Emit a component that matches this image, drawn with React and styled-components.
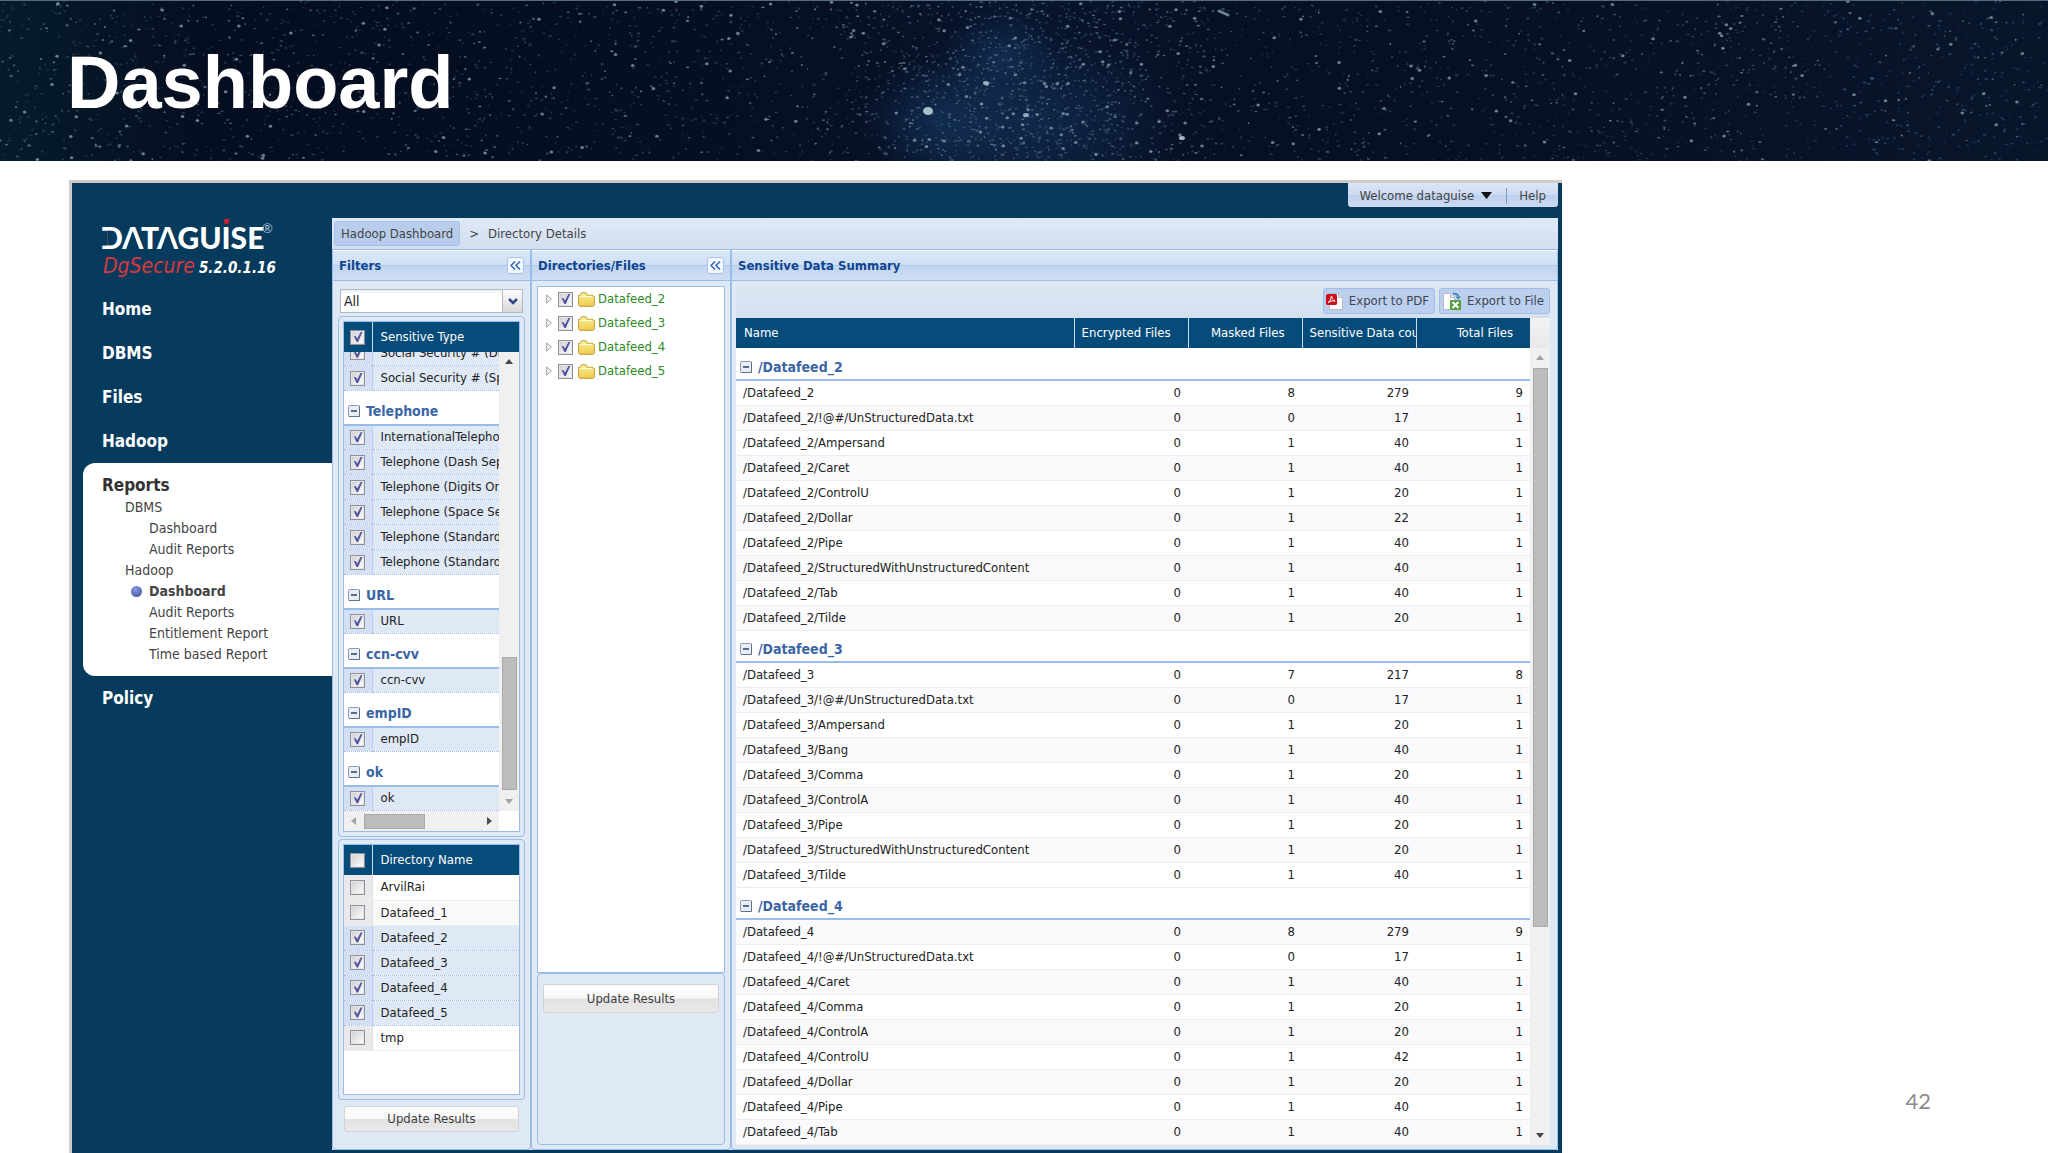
import React, { useState } from "react";
import styled, { createGlobalStyle, css } from "styled-components";

const GlobalStyle = createGlobalStyle`
  * { box-sizing: border-box; }

  body {
    margin: 0;
    background: #fff;
    color: #222;
    font: 13px/16px "DejaVu Sans Condensed", "DejaVu Sans", sans-serif;
  }

  button, select, input { font: inherit; color: inherit; margin: 0; }
  table { border-collapse: collapse; border-spacing: 0; table-layout: fixed; width: 100%; }
  a { color: inherit; text-decoration: none; }
  ul { list-style: none; margin: 0; padding: 0; }
`;

const navy = "#063b5d";
const headBlue = "#064c7b";
const line = "#99bce8";
const panelBg = "#dfe8f5";

/* ---------- data ---------- */

const sensitiveGroups = [
  { title: "", items: ["Social Security # (Digits)", "Social Security # (Space)"] },
  {
    title: "Telephone",
    items: [
      "InternationalTelephone",
      "Telephone (Dash Separated)",
      "Telephone (Digits Only)",
      "Telephone (Space Separated)",
      "Telephone (Standard)",
      "Telephone (Standard US)",
    ],
  },
  { title: "URL", items: ["URL"] },
  { title: "ccn-cvv", items: ["ccn-cvv"] },
  { title: "empID", items: ["empID"] },
  { title: "ok", items: ["ok"] },
];

const directories = [
  ["ArvilRai", false],
  ["Datafeed_1", false],
  ["Datafeed_2", true],
  ["Datafeed_3", true],
  ["Datafeed_4", true],
  ["Datafeed_5", true],
  ["tmp", false],
];

const tree = ["Datafeed_2", "Datafeed_3", "Datafeed_4", "Datafeed_5"];

const summary = [
  {
    name: "/Datafeed_2",
    rows: [
      ["", 0, 8, 279, 9],
      ["/!@#/UnStructuredData.txt", 0, 0, 17, 1],
      ["/Ampersand", 0, 1, 40, 1],
      ["/Caret", 0, 1, 40, 1],
      ["/ControlU", 0, 1, 20, 1],
      ["/Dollar", 0, 1, 22, 1],
      ["/Pipe", 0, 1, 40, 1],
      ["/StructuredWithUnstructuredContent", 0, 1, 40, 1],
      ["/Tab", 0, 1, 40, 1],
      ["/Tilde", 0, 1, 20, 1],
    ],
  },
  {
    name: "/Datafeed_3",
    rows: [
      ["", 0, 7, 217, 8],
      ["/!@#/UnStructuredData.txt", 0, 0, 17, 1],
      ["/Ampersand", 0, 1, 20, 1],
      ["/Bang", 0, 1, 40, 1],
      ["/Comma", 0, 1, 20, 1],
      ["/ControlA", 0, 1, 40, 1],
      ["/Pipe", 0, 1, 20, 1],
      ["/StructuredWithUnstructuredContent", 0, 1, 20, 1],
      ["/Tilde", 0, 1, 40, 1],
    ],
  },
  {
    name: "/Datafeed_4",
    rows: [
      ["", 0, 8, 279, 9],
      ["/!@#/UnStructuredData.txt", 0, 0, 17, 1],
      ["/Caret", 0, 1, 40, 1],
      ["/Comma", 0, 1, 20, 1],
      ["/ControlA", 0, 1, 20, 1],
      ["/ControlU", 0, 1, 42, 1],
      ["/Dollar", 0, 1, 20, 1],
      ["/Pipe", 0, 1, 40, 1],
      ["/Tab", 0, 1, 40, 1],
    ],
  },
];

/* ---------- banner ---------- */

const Page = styled.div`
  display: flex;
  flex-direction: column;
  min-height: 100vh;
`;

const Banner = styled.header`
  display: grid;
  height: 161px;
  overflow: hidden;
  border-top: 1px solid #566b7d;
  background: linear-gradient(90deg, #051c2c 0, #050e20 10%, #060f23 40%, #08152d 50%, #060f23 62%, #071227 85%, #08162b 100%);
`;

const Stars = styled.svg`
  grid-area: 1 / 1;
  width: 100%;
  height: 160px;
`;

const Title = styled.h1`
  grid-area: 1 / 1;
  align-self: center;
  z-index: 1;
  margin: 0;
  padding: 4px 0 0 67px;
  color: #fff;
  font: bold 74px/84px "Liberation Sans", Arial, sans-serif;
`;

function makeStars(count) {
  let seed = 4211;
  const rnd = () => {
    seed = (seed * 16807) % 2147483647;
    return seed / 2147483647;
  };
  const colors = ["#5d7488", "#3f566e", "#2f4d66", "#8296a6", "#34506a"];
  return Array.from({ length: count }, (_, i) => {
    // every fifth star gathers in the milky band
    const x = i % 5 === 0 ? 820 + (rnd() + rnd()) * 200 : rnd() * 2048;
    const big = rnd() > 0.96;
    return {
      x,
      y: rnd() * 160,
      rx: big ? 1.8 : 0.7 + rnd() * 1.1,
      ry: big ? 1.5 : 0.6 + rnd() * 0.6,
      fill: big ? "#8399a9" : colors[i % 5],
      opacity: big ? 0.8 : 0.3 + rnd() * 0.5,
    };
  });
}

const stars = makeStars(4200);

function StarField() {
  return (
    <Stars viewBox="0 0 2048 160" preserveAspectRatio="xMidYMid slice" aria-hidden="true">
      <defs>
        <radialGradient id="haze">
          <stop offset="0" stopColor="#1c4678" stopOpacity="0.4" />
          <stop offset="1" stopColor="#1c4678" stopOpacity="0" />
        </radialGradient>
      </defs>
      <ellipse cx="1000" cy="55" rx="60" ry="50" fill="url(#haze)" />
      <ellipse cx="1030" cy="120" rx="150" ry="90" fill="url(#haze)" />
      <ellipse cx="940" cy="120" rx="80" ry="60" fill="url(#haze)" />
      {stars.map((s, i) => (
        <ellipse key={i} cx={s.x} cy={s.y} rx={s.rx} ry={s.ry} fill={s.fill} opacity={s.opacity} />
      ))}
      <ellipse cx="928" cy="110" rx="5" ry="4" fill="#a9bfcc" />
      <ellipse cx="1026" cy="114" rx="3" ry="2" fill="#8fa9bd" />
      <ellipse cx="986" cy="82" rx="3" ry="2" fill="#9db0bd" />
      <ellipse cx="1182" cy="137" rx="3" ry="2" fill="#a8b4bf" />
      <path d="M1219 10l9 4" stroke="#6b8394" strokeWidth="3" strokeLinecap="round" />
    </Stars>
  );
}

/* ---------- window ---------- */

const Stage = styled.div`
  display: flex;
  flex: 1;
  padding: 19px 0 0 69px;
`;

const Window = styled.div`
  display: grid;
  grid-template-columns: 260px minmax(0, 1fr);
  flex: 1;
  min-width: 0;
  padding: 0 4px 4px 0;
  border: solid #cdccc8;
  border-width: 3px 0 0 3px;
  background: ${navy};
`;

const SlideNumber = styled.aside`
  display: flex;
  flex: 0 0 486px;
  align-items: flex-end;
  justify-content: flex-end;
  padding: 0 117px 39px 0;
  color: #8b8b8b;
  font: 22px/28px Lato, sans-serif;
`;

const Sidebar = styled.aside`
  display: flex;
  flex-direction: column;
  padding-top: 32px;
`;

const Brand = styled.div`
  height: 72px;
  padding-left: 29px;

  svg { display: block; }
`;

const Product = styled.div`
  display: flex;
  align-items: baseline;
  gap: 4px;
  margin: 0 0 0 2px;
  color: #fff;
  font-style: italic;
  font-weight: bold;
  font-size: 15px;
  line-height: 26px;
`;

const ProductName = styled.span`
  color: #d8393e;
  font-weight: normal;
  font-size: 21px;
`;

const NavLink = styled.a`
  display: block;
  padding-left: 30px;
  color: #fff;
  font-weight: bold;
  font-size: 17px;
  line-height: 44px;
`;

const NavGroup = styled.div`
  margin: 0 0 0 11px;
  padding: 10px 0 11px;
  border-radius: 12px 0 0 12px;
  background: #fff;
  color: #444;
  font-size: 14px;
  line-height: 21px;
`;

const NavGroupTitle = styled.a`
  display: block;
  padding-left: 19px;
  color: #333;
  font-weight: bold;
  font-size: 17px;
  line-height: 24px;
`;

const SubLink = styled.a`
  display: flex;
  align-items: center;
  gap: 7px;
  padding-left: ${(p) => (p.$active ? 48 : p.$deep ? 66 : 42)}px;
  font-weight: ${(p) => (p.$active ? "bold" : "normal")};
  font-size: 14px;

  ${(p) =>
    p.$active &&
    css`
      &::before {
        content: "";
        width: 11px;
        height: 11px;
        border-radius: 50%;
        background: radial-gradient(circle at 40% 30%, #8a9ade, #3a479c);
      }
    `}
`;

const Content = styled.main`
  display: flex;
  flex-direction: column;
  min-width: 0;
`;

const TopBar = styled.div`
  display: flex;
  justify-content: flex-end;
  align-items: flex-start;
  height: 35px;
`;

const UserBox = styled.div`
  display: flex;
  align-items: center;
  height: 24px;
  padding: 1px 12px 0 6px;
  border-radius: 0 0 3px 3px;
  background: linear-gradient(#dbe5f5 0, #cddcf2 48%, #bdd0ec 50%, #cbdaf1 100%);
  color: #444;
`;

const UserButton = styled.button`
  display: flex;
  align-items: center;
  gap: 7px;
  padding: 0 14px 0 5px;
  border: 0;
  border-right: 1px solid #7f96b8;
  background: none;
`;

const HelpLink = styled.a`
  padding-left: 12px;
`;

const Crumbs = styled.nav`
  display: flex;
  align-items: center;
  gap: 9px;
  height: 32px;
  padding: 0 2px;
  border-bottom: 1px solid ${line};
  background: linear-gradient(#e0e9f6, #d2dff0);
  color: #444;
`;

const Crumb = styled.a`
  ${(p) =>
    p.$boxed &&
    css`
      padding: 4px 6px 3px;
      border: 1px solid #a3c3ee;
      border-radius: 3px;
      background: #b8cdec;
    `}
`;

const Panels = styled.div`
  display: grid;
  grid-template-columns: 199px 200px minmax(0, 1fr);
  flex: 1;
  background: ${panelBg};
`;

const Panel = styled.section`
  display: flex;
  flex-direction: column;
  min-width: 0;
  border: solid ${line};
  border-width: 0 1px 1px;
  border-radius: 0 0 4px 4px;
`;

const PanelHead = styled.div`
  display: flex;
  align-items: center;
  justify-content: space-between;
  height: 31px;
  padding: 0 6px;
  border-top: 1px solid #fff;
  border-bottom: 1px solid ${line};
  background: linear-gradient(#dbe7f7 0, #cfe0f5 48%, #b0c9ea 48%, #b0c9ea 52%, #c2d5ef 52%, #cddef4 100%);
`;

const PanelTitle = styled.h2`
  margin: 0;
  color: #0f4590;
  font-weight: bold;
  font-size: 13px;
  line-height: 16px;
`;

const CollapseButton = styled.button`
  display: flex;
  align-items: center;
  justify-content: center;
  width: 17px;
  height: 17px;
  padding: 0;
  border: 1px solid #a9c4e8;
  border-radius: 3px;
  background: #f2f7fd;
`;

const FilterBody = styled.div`
  display: flex;
  flex: 1;
  flex-direction: column;
  padding: 8px 5px 17px;
`;

const Combo = styled.div`
  display: flex;
  position: relative;
  height: 24px;
  margin: 0 2px 3px;
  border: 1px solid #b5b8c8;
  background: #fff;

  select {
    flex: 1;
    appearance: none;
    padding: 0 24px 0 3px;
    border: 0;
    background: linear-gradient(#e9eef2, #fff 4px);
    font-size: 14px;
  }
`;

const ComboArrow = styled.span`
  display: flex;
  position: absolute;
  inset: 0 0 0 auto;
  align-items: center;
  justify-content: center;
  width: 20px;
  border-left: 1px solid #b5b8c8;
  background: linear-gradient(#fdfdfd, #d8d8d8);
  pointer-events: none;
`;

const Frame = styled.div`
  display: flex;
  flex: ${(p) => (p.$grow ? "1 1 0" : "none")};
  flex-direction: column;
  min-height: 0;
  margin-bottom: 2px;
  padding: 4px;
  border: 1px solid ${line};
  border-radius: 4px;
  background: ${panelBg};
`;

const GridBox = styled.div`
  display: flex;
  flex: 1;
  flex-direction: column;
  min-height: 251px;
  border: 1px solid ${line};
  background: #fff;
`;

const HeadCell = styled.th`
  height: 30px;
  padding: 0 8px;
  border-right: 1px solid #c9dcf0;
  background: ${headBlue};
  color: #fff;
  font-weight: normal;
  text-align: left;

  &:last-child { border-right: 0; }
`;

const CheckHead = styled(HeadCell)`
  width: 28px;
  padding: 0;
  text-align: center;
`;

const Check = styled.input`
  appearance: none;
  display: block;
  flex: none;
  width: 15px;
  height: 15px;
  margin: 0 auto;
  border: 1px solid #8f9299;
  background: linear-gradient(135deg, #cfcfd2, #fff);
  box-shadow: inset 0 0 0 1px #e4e4e4;

  &:checked::before {
    content: "";
    display: block;
    width: 13px;
    height: 13px;
    background: #5257a0;
    clip-path: polygon(20% 45%, 34% 42%, 46% 62%, 72% 12%, 86% 12%, 53% 88%, 41% 88%);
  }
`;

const ListWrap = styled.div`
  display: flex;
  flex: 1 1 0;
  min-height: 0;
`;

// keeps the end of the list in view, as after scrolling down
const ListView = styled.div`
  display: flex;
  flex: 1;
  flex-direction: column;
  justify-content: flex-end;
  min-width: 0;
  overflow: hidden;
`;

const ItemRow = styled.tr`
  height: 25px;
  background: ${(p) => (p.$selected ? panelBg : p.$odd ? "#faf9fa" : "#fff")};

  td {
    padding: 0;
    overflow: hidden;
    border-bottom: 1px ${(p) => (p.$selected ? "dotted #a3bae9" : "solid #ededed")};
    white-space: nowrap;
  }

  td:first-child {
    width: 28px;
    border-right: 1px solid ${(p) => (p.$selected ? "#b9cdf2" : "#e2e0e2")};
    background: ${(p) => (p.$selected ? "#d3e0f4" : "#ebe9eb")};
  }

  td:last-child { padding-left: 8px; }
`;

const GroupRow = styled.tr`
  th {
    height: ${(p) => (p.$tall ? 34 : 32)}px;
    padding: 7px 0 0 4px;
    border-bottom: 2px solid ${line};
    background: #fff;
    text-align: left;
  }
`;

const GroupButton = styled.button`
  display: flex;
  align-items: center;
  gap: 6px;
  padding: 0;
  border: 0;
  background: none;
  color: #3b65a5;
  font-weight: bold;
  font-size: 14px;
  line-height: 18px;
`;

const Bar = styled.div`
  display: flex;
  flex: none;
  flex-direction: ${(p) => (p.$horizontal ? "row" : "column")};
  align-items: center;
  background: #f1f0f1;
  ${(p) => (p.$horizontal ? "height: 20px; margin-right: 20px;" : "width: 20px;")}

  svg { flex: none; }
`;

const BarGap = styled.div`
  flex: ${(p) => p.$part} 1 0;
`;

const Thumb = styled.div`
  flex: ${(p) => p.$part} 1 0;
  ${(p) => (p.$horizontal ? "height: 15px;" : "width: 15px;")}
  border: 1px solid #a9a9a9;
  background: #bcbcbc;
`;

const UpdateButton = styled.button`
  height: ${(p) => (p.$tall ? 29 : 26)}px;
  margin: ${(p) => (p.$tall ? "10px 5px 0" : "4px 6px 0")};
  padding: 0;
  border: 1px solid #d3d3d3;
  border-radius: 3px;
  background: linear-gradient(#fefefe 0, #f8f8f8 48%, #e3e2e2 52%, #e9e8e8 100%);
  color: #3c3c3c;
`;

const TreeBody = styled.div`
  display: flex;
  flex: 1;
  flex-direction: column;
  padding: 5px 5px 4px;
`;

const Tree = styled.ul`
  && {
    flex: 1;
    padding-left: 8px;
    border: 1px solid ${line};
    background: #fff;
  }
`;

const TreeItem = styled.li`
  display: flex;
  align-items: center;
  height: 24px;
  color: #2a8a1f;

  input { margin: 0 5px 0 6px; }
  label { padding-left: 3px; }
`;

const TreeFooter = styled.div`
  display: flex;
  flex-direction: column;
  height: 172px;
  border: 1px solid ${line};
  border-radius: 4px;
`;

const SummaryBody = styled.div`
  display: flex;
  flex: 1;
  flex-direction: column;
  padding: 0 7px 4px 4px;
`;

const Toolbar = styled.div`
  display: flex;
  align-items: center;
  justify-content: flex-end;
  gap: 4px;
  height: 37px;
  padding-top: 3px;
  background: linear-gradient(#dfe8f5, #d4e0ee);
`;

const ToolButton = styled.button`
  display: flex;
  align-items: center;
  gap: 5px;
  height: 26px;
  padding: 0 5px 0 2px;
  border: 1px solid #9fbfea;
  border-radius: 3px;
  background: #bccfee;
  color: #3f4552;
`;

const SummaryGrid = styled.div`
  display: flex;
  flex: 1 1 0;
  min-height: 827px;
  overflow: hidden;
  background: #fff;
`;

const SummaryView = styled.div`
  flex: 1;
  min-width: 0;
`;

const BarColumn = styled.div`
  display: flex;
  flex-direction: column;
  background: linear-gradient(#f3f3f5, #e9e9ec 30px);

  ${Bar} { flex: 1; margin-top: 30px; }
`;

const NumHead = styled(HeadCell)`
  width: 114px;
  padding: 0 17px 0 0;
  overflow: hidden;
  text-align: right;
  white-space: nowrap;
`;

const ClippedHead = styled(NumHead)`
  padding: 0 0 0 7px;
  text-align: left;
`;

const DataRow = styled.tr`
  height: 25px;
  background: ${(p) => (p.$odd ? "#faf9fb" : "#fff")};

  td {
    padding: 0 7px;
    border-bottom: 1px solid #ededed;
    text-align: right;
    white-space: nowrap;
  }

  td:first-child { text-align: left; }
`;

/* ---------- icons ---------- */

const Logo = () => (
  <svg width="180" height="38" viewBox="0 0 180 38" role="img" aria-label="Dataguise">
    <text x="-1" y="34" fill="#fff" fontFamily="Lato, sans-serif" fontWeight="900" fontSize="30">
      DATAGUISE
    </text>
    {/* the D has no stem and the A no bar */}
    <g fill={navy}>
      <path d="M0 15.800h6v14.800H0z" />
      <path d="M31.700 16l6.800 18.500H25z" />
      <path d="M66.600 16l6.800 18.500H59.900z" />
    </g>
    <path d="M122.500 4h6l-1 5h-4z" fill="#c2213a" />
    <text x="161" y="18" fill="#a8c0d0" fontFamily="Lato, sans-serif" fontSize="13">
      ®
    </text>
  </svg>
);

const Collapse = () => (
  <svg width="11" height="9" viewBox="0 0 11 9" fill="none" stroke="#2f66b0" strokeWidth="1.5">
    <path d="M5 .5l-4 4 4 4M10 .5l-4 4 4 4" />
  </svg>
);

const Minus = () => (
  <svg width="12" height="12" viewBox="0 0 12 12">
    <rect x=".5" y=".5" width="11" height="11" rx="1" fill="#e9eef5" stroke="#8b9bb3" />
    <path d="M11.5 1v10.5H1" fill="none" stroke="#5d6f8c" />
    <path d="M3 6h6" stroke="#27406b" strokeWidth="1.5" />
  </svg>
);

const arrowPaths = {
  up: "M6 12l4-5 4 5z",
  down: "M6 8l4 5 4-5z",
  left: "M12 6l-5 4 5 4z",
  right: "M8 6l5 4-5 4z",
};

const Arrow = ({ dir, dark }) => (
  <svg width="20" height="20" viewBox="0 0 20 20">
    <path d={arrowPaths[dir]} fill={dark ? "#484848" : "#a3a3a3"} />
  </svg>
);

const Expander = () => (
  <svg width="6" height="10" viewBox="0 0 6 10">
    <path d="M.7 1l4.6 4-4.6 4z" fill="#fff" stroke="#9a9a9a" />
  </svg>
);

const Folder = () => (
  <svg width="17" height="15" viewBox="0 0 17 15">
    <defs>
      <linearGradient id="folder" x2="0" y2="1">
        <stop offset="0" stopColor="#fdf3a0" />
        <stop offset="1" stopColor="#efc94c" />
      </linearGradient>
    </defs>
    <path d="M.6 12.6V3.4h1.6L3.4.8h4.4l1.2 2.4h6v1.4h1.3v8.4l-1 1.3H1.6z" fill="url(#folder)" stroke="#c49a34" />
    <path d="M1.6 4.4h13" stroke="#fffbd8" />
  </svg>
);

const PdfIcon = () => (
  <svg width="18" height="19" viewBox="0 0 18 19">
    <path d="M3.5 1.5h9l4 4v12h-13z" fill="#fff" stroke="#b5bac4" />
    <path d="M12.5 1.5v4h4" fill="#e3e6ec" stroke="#b5bac4" />
    <rect x="0" y="2" width="11" height="11" rx="1.5" fill="#c9101c" />
    <path d="M2 10.500c2-1 3-3.200 3-5.700 0-.8 1-.8 1 0 0 2 1 3.700 3.200 4.200-2.500-.4-4.700.2-7.200 1.500z" fill="none" stroke="#fff" />
  </svg>
);

const ExcelIcon = () => (
  <svg width="20" height="19" viewBox="0 0 20 19">
    <path d="M1.5 1.5h7l4 4v12h-11z" fill="#fff" stroke="#b5bac4" />
    <path d="M8.5 1.5v4h4" fill="#e3e6ec" stroke="#b5bac4" />
    <path d="M11 1.5c3 0 5 1 5.500 3.500" fill="none" stroke="#4a86c5" strokeWidth="2" />
    <path d="M13.500 4.500h5.500l-2.800 3z" fill="#4a86c5" />
    <rect x="8" y="8" width="11" height="10" rx="1" fill="#56a03c" />
    <path d="M10.500 10l6 6M16.500 10l-6 6" stroke="#fff" strokeWidth="2" />
  </svg>
);

/* ---------- parts ---------- */

function CheckRow({ id, label, checked, odd }) {
  const [on, setOn] = useState(checked);
  return (
    <ItemRow $selected={on} $odd={odd}>
      <td>
        <Check type="checkbox" id={id} checked={on} onChange={() => setOn(!on)} />
      </td>
      <td>
        <label htmlFor={id}>{label}</label>
      </td>
    </ItemRow>
  );
}

function CheckTableHead({ label, checked }) {
  return (
    <tr>
      <CheckHead>
        <Check type="checkbox" aria-label={`Select all: ${label}`} defaultChecked={checked} />
      </CheckHead>
      <HeadCell>{label}</HeadCell>
    </tr>
  );
}

function Filters() {
  return (
    <Panel>
      <PanelHead>
        <PanelTitle>Filters</PanelTitle>
        <CollapseButton aria-label="Collapse filters">
          <Collapse />
        </CollapseButton>
      </PanelHead>
      <FilterBody>
        <Combo>
          <select aria-label="Filter" defaultValue="All">
            <option>All</option>
          </select>
          <ComboArrow>
            <svg width="10" height="7" viewBox="0 0 10 7" fill="none" stroke="#2c4a86" strokeWidth="2.5">
              <path d="M1 1l4 4 4-4" />
            </svg>
          </ComboArrow>
        </Combo>
        <Frame $grow>
          <GridBox>
            <table>
              <thead>
                <CheckTableHead label="Sensitive Type" checked />
              </thead>
            </table>
            <ListWrap>
              <ListView>
                <table>
                  <colgroup>
                    <col width="28" />
                    <col />
                  </colgroup>
                  {sensitiveGroups.map((g, gi) => (
                    <tbody key={gi}>
                      {g.title && (
                        <GroupRow $tall>
                          <th colSpan="2">
                            <GroupButton>
                              <Minus />
                              {g.title}
                            </GroupButton>
                          </th>
                        </GroupRow>
                      )}
                      {g.items.map((item, i) => (
                        <CheckRow key={item} id={`type-${gi}-${i}`} label={item} checked />
                      ))}
                    </tbody>
                  ))}
                </table>
              </ListView>
              <Bar>
                <Arrow dir="up" dark />
                <BarGap $part={286} />
                <Thumb $part={131} />
                <BarGap $part={1} />
                <Arrow dir="down" />
              </Bar>
            </ListWrap>
            <Bar $horizontal>
              <Arrow dir="left" />
              <Thumb $horizontal $part={60} />
              <BarGap $part={54} />
              <Arrow dir="right" dark />
            </Bar>
          </GridBox>
        </Frame>
        <Frame>
          <GridBox>
            <table>
              <thead>
                <CheckTableHead label="Directory Name" />
              </thead>
              <tbody>
                {directories.map(([name, on], i) => (
                  <CheckRow key={name} id={`dir-${name}`} label={name} checked={on} odd={i % 2 === 1} />
                ))}
              </tbody>
            </table>
          </GridBox>
        </Frame>
        <UpdateButton>Update Results</UpdateButton>
      </FilterBody>
    </Panel>
  );
}

function Directories() {
  return (
    <Panel>
      <PanelHead>
        <PanelTitle>Directories/Files</PanelTitle>
        <CollapseButton aria-label="Collapse directories">
          <Collapse />
        </CollapseButton>
      </PanelHead>
      <TreeBody>
        <Tree>
          {tree.map((name) => (
            <TreeItem key={name}>
              <Expander />
              <Check type="checkbox" id={`tree-${name}`} defaultChecked />
              <Folder />
              <label htmlFor={`tree-${name}`}>{name}</label>
            </TreeItem>
          ))}
        </Tree>
        <TreeFooter>
          <UpdateButton $tall>Update Results</UpdateButton>
        </TreeFooter>
      </TreeBody>
    </Panel>
  );
}

function Summary() {
  let n = 0;
  return (
    <Panel>
      <PanelHead>
        <PanelTitle>Sensitive Data Summary</PanelTitle>
      </PanelHead>
      <SummaryBody>
        <Toolbar>
          <ToolButton>
            <PdfIcon />
            Export to PDF
          </ToolButton>
          <ToolButton>
            <ExcelIcon />
            Export to File
          </ToolButton>
        </Toolbar>
        <SummaryGrid>
          <SummaryView>
            <table>
              <thead>
                <tr>
                  <HeadCell>Name</HeadCell>
                  <NumHead>Encrypted Files</NumHead>
                  <NumHead>Masked Files</NumHead>
                  <ClippedHead>Sensitive Data count</ClippedHead>
                  <NumHead>Total Files</NumHead>
                </tr>
              </thead>
              {summary.map((group) => (
                <tbody key={group.name}>
                  <GroupRow>
                    <th colSpan="5">
                      <GroupButton>
                        <Minus />
                        {group.name}
                      </GroupButton>
                    </th>
                  </GroupRow>
                  {group.rows.map(([path, ...nums]) => (
                    <DataRow key={path} $odd={n++ % 2 === 1}>
                      <td>{group.name + path}</td>
                      {nums.map((v, i) => (
                        <td key={i}>{v}</td>
                      ))}
                    </DataRow>
                  ))}
                </tbody>
              ))}
            </table>
          </SummaryView>
          <BarColumn>
            <Bar>
              <Arrow dir="up" />
              <Thumb $part={558} />
              <BarGap $part={199} />
              <Arrow dir="down" dark />
            </Bar>
          </BarColumn>
        </SummaryGrid>
      </SummaryBody>
    </Panel>
  );
}

export default function App() {
  return (
    <Page>
      <GlobalStyle />
      <Banner>
        <StarField />
        <Title>Dashboard</Title>
      </Banner>
      <Stage>
        <Window>
          <Sidebar>
            <Brand>
              <Logo />
              <Product>
                <ProductName>DgSecure</ProductName>5.2.0.1.16
              </Product>
            </Brand>
            <nav>
              <NavLink href="#home">Home</NavLink>
              <NavLink href="#dbms">DBMS</NavLink>
              <NavLink href="#files">Files</NavLink>
              <NavLink href="#hadoop">Hadoop</NavLink>
              <NavGroup>
                <NavGroupTitle href="#reports">Reports</NavGroupTitle>
                <SubLink href="#reports-dbms">DBMS</SubLink>
                <SubLink $deep href="#dbms-dashboard">Dashboard</SubLink>
                <SubLink $deep href="#dbms-audit">Audit Reports</SubLink>
                <SubLink href="#reports-hadoop">Hadoop</SubLink>
                <SubLink $active href="#hadoop-dashboard">Dashboard</SubLink>
                <SubLink $deep href="#hadoop-audit">Audit Reports</SubLink>
                <SubLink $deep href="#entitlement">Entitlement Report</SubLink>
                <SubLink $deep href="#time-based">Time based Report</SubLink>
              </NavGroup>
              <NavLink href="#policy">Policy</NavLink>
            </nav>
          </Sidebar>
          <Content>
            <TopBar>
              <UserBox>
                <UserButton>
                  Welcome dataguise
                  <svg width="11" height="7" viewBox="0 0 11 7">
                    <path d="M0 0h11l-5.500 7z" fill="#111" />
                  </svg>
                </UserButton>
                <HelpLink href="#help">Help</HelpLink>
              </UserBox>
            </TopBar>
            <Crumbs>
              <Crumb $boxed href="#hadoop-dashboard">Hadoop Dashboard</Crumb>
              <span>&gt;</span>
              <Crumb href="#details">Directory Details</Crumb>
            </Crumbs>
            <Panels>
              <Filters />
              <Directories />
              <Summary />
            </Panels>
          </Content>
        </Window>
        <SlideNumber>42</SlideNumber>
      </Stage>
    </Page>
  );
}
